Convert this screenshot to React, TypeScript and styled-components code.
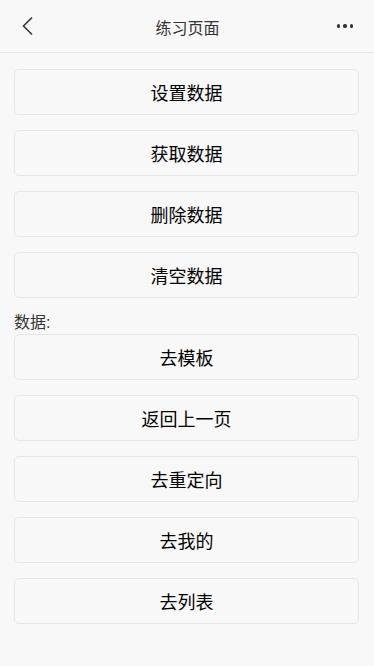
import styled, { createGlobalStyle } from "styled-components";

const GlobalStyle = createGlobalStyle`
    html, body {
        margin: 0;
        padding: 0;
        background-color: #f8f8f8;
        font-family: "Liberation Sans", "Noto Sans CJK SC", sans-serif;
    }
    * {
        box-sizing: border-box;
    }
`;

const topButtons = ["设置数据", "获取数据", "删除数据", "清空数据"];
const navButtons = ["去模板", "返回上一页", "去重定向", "去我的", "去列表"];

const App = () => {
    return (
        <Page>
            <GlobalStyle />
            <NavBar>
                <IconButton aria-label="back" $side="start">
                    <svg width="20" height="20" viewBox="0 0 20 20">
                        <path d="M14 1.5 L5.5 10 L14 18.5" fill="none" stroke="#333" strokeWidth="1.6" />
                    </svg>
                </IconButton>
                <Title>练习页面</Title>
                <IconButton aria-label="more" $side="end">
                    <MoreDots>
                        <span />
                        <span />
                        <span />
                    </MoreDots>
                </IconButton>
            </NavBar>
            <Content>
                {topButtons.map((label) => (
                    <ActionButton key={label}>{label}</ActionButton>
                ))}
                <DataLabel>数据:</DataLabel>
                {navButtons.map((label) => (
                    <ActionButton key={label}>{label}</ActionButton>
                ))}
            </Content>
        </Page>
    );
};

export default App;

const Page = styled.div`
    min-height: 666px;
    background-color: #f8f8f8;
`;

const NavBar = styled.div`
    height: 53px;
    display: grid;
    grid-template-columns: 1fr auto 1fr;
    align-items: center;
    padding: 0 15px 0 14px;
    background-color: #f8f8f8;
    border-bottom: 1px solid #e5e5e5;
`;

const IconButton = styled.div<{ $side: "start" | "end" }>`
    width: 28px;
    height: 28px;
    display: flex;
    align-items: center;
    justify-content: center;
    justify-self: ${(p) => p.$side};
`;

const Title = styled.div`
    font-size: 16px;
    color: #333;
    margin-top: 1px;
    padding-left: 2px;
`;

const MoreDots = styled.div`
    display: flex;
    gap: 3.5px;
    > span {
        width: 3.3px;
        height: 3.3px;
        border-radius: 50%;
        background-color: #333;
    }
`;

const Content = styled.div`
    display: flex;
    flex-direction: column;
    padding: 16px 15px 0 14px;
`;

const ActionButton = styled.div`
    height: 46px;
    margin-bottom: 15px;
    display: flex;
    align-items: center;
    justify-content: center;
    border: 1px solid #e5e5e5;
    border-radius: 5px;
    background-color: #f8f8f8;
    font-size: 18px;
    color: #000;
`;

const DataLabel = styled.div`
    font-size: 16px;
    line-height: 22px;
    color: #333;
    margin-top: -1px;
    margin-bottom: 0;
`;
